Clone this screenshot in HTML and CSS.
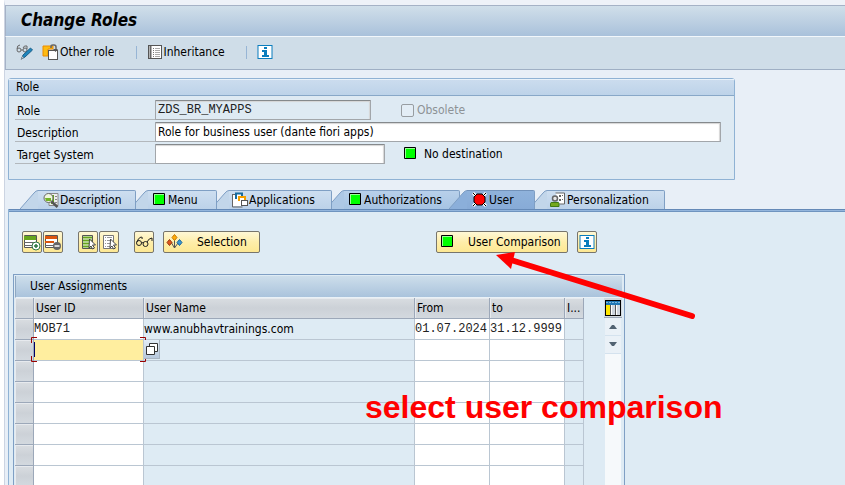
FILE: index.html
```html
<!DOCTYPE html>
<html lang="en">
<head>
<meta charset="utf-8">
<title>Change Roles</title>
<link rel="stylesheet" href="styles.css">
</head>
<body>
<svg class="defs" aria-hidden="true">
  <defs>
    <symbol id="i-green" viewBox="0 0 16 16"><rect x="2" y="1" width="12" height="12" rx="1" fill="#000"/><rect x="3" y="2" width="10" height="10" fill="#9f9"/><rect x="4" y="3" width="9" height="9" fill="#0f0"/></symbol>
    <symbol id="i-info" viewBox="0 0 16 16"><rect x="1" y="1.500" width="14" height="13" fill="#fff" stroke="#0a7dbd"/><path d="M7 3h3v2H7zM5 6h5v5h2v2H5v-2h2V8H5z" fill="#0a7dbd"/></symbol>
    <symbol id="i-slant" viewBox="0 0 18 19"><path d="M0 19L14 3Q16 .5 18 .5V19Z" fill="var(--tab)"/><path d="M0 19L14 3Q16 .5 18 .5" fill="none" stroke="#7f9fc4"/></symbol>
  </defs>
</svg>
<main class="window">
  <header class="titlebar"><h1>Change Roles</h1></header>
  <nav class="toolbar" aria-label="Functions">
    <button class="tool" aria-label="Display or change"><svg width="18" height="16" viewBox="0 0 18 16" fill="none" stroke="#666"><circle cx="3" cy="6" r="2"/><circle cx="9" cy="6" r="2"/><path d="M1 5Q1 1 4 1M7 4Q8 1 11 2L11 5M5 6h2"/><path d="M5.500 15l1.500-4 7.500-7 2 2-7.500 7z" fill="#1f86bd" stroke="#1d5f88"/><path d="M5 15.500l1.500-3 1 1z" fill="#fff" stroke="#777" stroke-width=".6"/></svg></button>
    <button class="tool other"><svg width="17" height="16" viewBox="0 0 17 16"><path d="M1 2h10v3H6v7H1z" fill="#fdbb12" stroke="#ec8b00"/><path d="M9 4V2.500Q9 1 11 1h1q2 0 2 2v3" fill="none" stroke="#666" stroke-width="1.500"/><rect x="6.500" y="6.500" width="9" height="9" fill="#fff" stroke="#555"/><path d="M11 5h5l-2.500 3z" fill="#555"/></svg><span>Other role</span></button>
    <i class="sep"></i>
    <button class="tool"><svg width="16" height="16" viewBox="0 0 16 16"><rect x="1.500" y="1.500" width="13" height="13" fill="#fff" stroke="#555"/><path d="M3.500 2v12" stroke="#666" stroke-width="2"/><path d="M6 4.500h1M6 6.500h1M6 8.500h1M6 10.500h1M6 12.500h1" stroke="#777"/><path d="M8 4.500h5M8 6.500h5M8 8.500h5M8 10.500h5M8 12.500h5" stroke="#aaa"/></svg><span>Inheritance</span></button>
    <i class="sep"></i>
    <button class="tool" aria-label="Information"><svg width="16" height="16"><use href="#i-info"/></svg></button>
  </nav>

  <section class="group">
    <h2>Role</h2>
    <div class="field"><label for="role">Role</label><input id="role" class="short mono" value="ZDS_BR_MYAPPS" readonly>
      <label class="check"><input type="checkbox" disabled>Obsolete</label></div>
    <div class="field"><label for="desc">Description</label><input id="desc" class="long" value="Role for business user (dante fiori apps)"></div>
    <div class="field"><label for="target">Target System</label><input id="target" class="medium">
      <span class="status"><svg width="16" height="16"><use href="#i-green"/></svg>No destination</span></div>
  </section>

  <div class="tabs" role="tablist">
    <button role="tab" class="tab first"><svg class="slant"><use href="#i-slant"/></svg><svg width="16" height="16" viewBox="0 0 16 16"><path d="M6 1.500h9v12H6z" fill="#eee" stroke="#888"/><path d="M8 3h3v9H8z" fill="#63a51b"/><path d="M12 4.500h2M12 7.500h2M12 10.500h2" stroke="#888"/><circle cx="5.500" cy="6" r="4.500" fill="#eef6dd" stroke="#666"/><path d="M2 6h6v3H3z" fill="#72b526"/><path d="M8.500 9.500l6 5.500" stroke="#555" stroke-width="2.500"/></svg><span>Description</span></button>
    <button role="tab" class="tab"><svg class="slant"><use href="#i-slant"/></svg><svg width="16" height="16"><use href="#i-green"/></svg><span>Menu</span></button>
    <button role="tab" class="tab"><svg class="slant"><use href="#i-slant"/></svg><svg width="16" height="16" viewBox="0 0 16 16"><path d="M1 2.500h3M.5 2v13h10" stroke="#666" fill="none"/><path d="M1 3h8v11H1z" fill="#fff"/><path d="M4 7V1.500h6V4" fill="#fff" stroke="#176b9e" stroke-width="2"/><path d="M7 9V5h6v3" fill="#fff" stroke="#f5a000" stroke-width="2"/><rect x="9.500" y="8.500" width="6" height="5" fill="#fff" stroke="#555"/></svg><span>Applications</span></button>
    <button role="tab" class="tab dark"><svg class="slant"><use href="#i-slant"/></svg><svg width="16" height="16"><use href="#i-green"/></svg><span>Authorizations</span></button>
    <button role="tab" class="tab active" aria-selected="true"><svg class="slant"><use href="#i-slant"/></svg><svg width="16" height="16" viewBox="0 0 16 16"><path d="M1 1l3 3M14 1l-3 3M1 14l3-3M14 14l-3-3" stroke="#fff" stroke-width="3"/><path d="M1 1l13 13M14 1L1 14" stroke="#000"/><path d="M5 2h5l3 3v5l-3 3H5l-3-3V5z" fill="red" stroke="#000"/></svg><span>User</span></button>
    <button role="tab" class="tab"><svg class="slant"><use href="#i-slant"/></svg><svg width="16" height="16" viewBox="0 0 16 16"><path d="M5.500 1h9v11h-5" fill="#fff" stroke="#666"/><path d="M9 3h2v2H9zM12 3h1v1h-1zM9 7h2v2H9zM12 7h1v1h-1z" fill="#666"/><circle cx="5" cy="6.500" r="2.500" fill="#e8e8e8" stroke="#666" stroke-width="1.500"/><path d="M.5 14.500v-3q0-1 1.500-1h6q1 0 1 1v3z" fill="#75a81d" stroke="#3f7a14"/></svg><span>Personalization</span></button>
  </div>

  <section class="panel" role="tabpanel">
    <div class="actions">
      <div class="pair">
        <button class="btn icon" aria-label="Insert row"><svg width="18" height="18" viewBox="0 0 18 18"><path d="M1.500 2.500h12v12h-12z" fill="#fff" stroke="#555"/><path d="M1 3h12v4H1z" fill="#67a51d"/><path d="M1 9.500h12M1 12.500h12" stroke="#666"/><circle cx="13" cy="13" r="4" fill="#fff" stroke="#2c7942"/><path d="M13 11v4M11 13h4" stroke="#2c7942" stroke-width="1.500"/></svg></button>
        <button class="btn icon" aria-label="Delete row"><svg width="18" height="18" viewBox="0 0 18 18"><path d="M1.500 2.500h12v12h-12z" fill="#fff" stroke="#555"/><path d="M1 3h12v3H1zM1 8h9v2H1z" fill="#dc560c"/><path d="M1 12.500h12" stroke="#666"/><circle cx="13" cy="13" r="4" fill="#666"/><path d="M10.500 13h5" stroke="#fff" stroke-width="1.500"/></svg></button>
      </div>
      <div class="pair">
        <button class="btn icon" aria-label="Select all"><svg width="18" height="18" viewBox="0 0 18 18"><path d="M3.500 2.500h10v13h-10z" fill="#fff" stroke="#555"/><path d="M4 4.500h9M4 7.500h9M4 10.500h9M4 13.500h9" stroke="#67a51d" stroke-width="2"/><path d="M10.500 6l6 6h-3l2 3-2 1-1.500-3-2 2z" fill="#fff" stroke="#444"/></svg></button>
        <button class="btn icon" aria-label="Deselect all"><svg width="18" height="18" viewBox="0 0 18 18"><path d="M3.500 2.500h10v13h-10z" fill="#fff" stroke="#777"/><path d="M5 4.500h1M5 7.500h1M5 10.500h1M5 13.500h1M7 4.500h5M7 7.500h5M7 10.500h5M7 13.500h5" stroke="#999"/><path d="M10.500 6l6 6h-3l2 3-2 1-1.500-3-2 2z" fill="#fff" stroke="#444"/></svg></button>
      </div>
      <button class="btn icon" aria-label="Display"><svg width="18" height="18" viewBox="0 0 18 18" fill="none" stroke="#222"><circle cx="4" cy="10" r="2.500"/><circle cx="10.500" cy="11" r="2.500"/><path d="M2 9Q3 5 6 4q2 0 1 2M6.500 10q1-1 2 0M12 9q2-4 5-4v3"/></svg></button>
      <button class="btn selection"><svg width="18" height="18" viewBox="0 0 18 18"><path d="M8.500 6v9M5 9l3.500 6L12 10" fill="none" stroke="#555"/><path d="M8.500 1.500l2.500 3-2.500 3-2.500-3z" fill="#ffad0a" stroke="#c77800"/><path d="M3.500 6.500l2.500 3-2.500 3-2.500-3z" fill="#df571c" stroke="#963411"/><path d="M13.500 6.500l2.500 3-2.500 3-2.500-3z" fill="#3d97d1" stroke="#17659a"/></svg><span>Selection</span></button>
      <button class="btn compare"><svg width="16" height="16"><use href="#i-green"/></svg><span>User Comparison</span></button>
      <button class="btn icon" aria-label="Information"><svg width="16" height="16"><use href="#i-info"/></svg></button>
    </div>

    <div class="grid">
      <h2>User Assignments</h2>
      <div class="gridbody">
        <table>
          <colgroup><col class="c-sel"><col class="c-id"><col class="c-name"><col class="c-date"><col class="c-date"><col class="c-ind"></colgroup>
          <thead><tr><th></th><th>User ID</th><th>User Name</th><th>From</th><th>to</th><th>I...</th></tr></thead>
          <tbody>
            <tr><th></th><td class="mono">MOB71</td><td>www.anubhavtrainings.com</td><td class="mono">01.07.2024</td><td class="mono">31.12.9999</td><td></td></tr>
            <tr><th></th><td class="focus"><input aria-label="User ID"><svg class="corners" viewBox="0 0 115 25" fill="none" stroke="#900"><path d="M.5 6V.5H6M109 .5h5.500V6M.5 19v5.500H6M109 24.500h5.500V19"/><path d="M3.500 5v15" stroke="#006"/></svg><button class="help" aria-label="Value help"><svg width="12" height="12" viewBox="0 0 12 12" fill="#fff" stroke="#333"><path d="M3.500 .5h8v8h-8z"/><path d="M.5 3.500h8v8h-8z"/></svg></button></td><td></td><td></td><td></td><td></td></tr>
            <tr><th></th><td></td><td></td><td></td><td></td><td></td></tr>
            <tr><th></th><td></td><td></td><td></td><td></td><td></td></tr>
            <tr><th></th><td></td><td></td><td></td><td></td><td></td></tr>
            <tr><th></th><td></td><td></td><td></td><td></td><td></td></tr>
            <tr><th></th><td></td><td></td><td></td><td></td><td></td></tr>
            <tr><th></th><td></td><td></td><td></td><td></td><td></td></tr>
          </tbody>
        </table>
        <div class="scroll">
          <button class="config" aria-label="Configuration"><svg width="16" height="16" viewBox="0 0 16 16"><rect x=".5" y=".5" width="15" height="15" fill="#fff" stroke="#000"/><path d="M1 1h14v4H1z" fill="#2077b5"/><path d="M1 2.500h14" stroke="#7db8df" stroke-dasharray="2 1"/><path d="M1 5h4v10H1z" fill="#ffe600"/><path d="M7 5h3v10H7zM12 5h3v10h-3z" fill="#cfd6df"/><path d="M5.500 5v10M10.500 5v10" stroke="#555"/></svg></button>
          <button class="arrow" aria-label="Scroll up"><svg width="8" height="5" viewBox="0 0 8 5"><path d="M0 5l3-4h2l3 4z" fill="#526372"/></svg></button>
          <button class="arrow" aria-label="Scroll down"><svg width="8" height="5" viewBox="0 0 8 5"><path d="M0 0h8L5 4H3z" fill="#526372"/></svg></button>
          <div class="track"></div>
        </div>
      </div>
    </div>
  </section>
</main>
<svg class="pointer" width="200" height="70" viewBox="0 0 200 70" aria-hidden="true"><path d="M16 9L197 65" stroke="red" stroke-width="6" stroke-linecap="round"/><path d="M1 4L20 1L16 18Z" fill="red"/></svg>
<p class="note">select user comparison</p>
</body>
</html>
```
FILE: styles.css
```css
* { box-sizing: border-box; }
body {
  margin: 0;
  min-height: 100vh;
  overflow: hidden;
  background: #fff;
  color: #000;
  font: 12px/16px "DejaVu Sans Condensed", "Noto Sans", sans-serif;
}
h1, h2, p { margin: 0; font-weight: normal; }
button, input { font: inherit; color: inherit; }
button { border: 0; padding: 0; background: none; }
svg { flex: none; display: block; }
.defs { position: absolute; width: 0; height: 0; }
.mono, .field > .mono { font-family: "Liberation Mono", monospace; color: #222; }

.window {
  margin-left: 4px;
  height: 100vh;
  min-height: 485px;
  display: flex;
  flex-direction: column;
  border-left: 1px solid #ccd4e2;
  border-top: 5px solid #eef2f8;
  background: #e8eff7;
}
.titlebar {
  height: 32px;
  padding: 5px 15px;
  flex: none;
  border-top: 1px solid #a5b2c6;
  border-left: 1px solid #a5b2c6;
  border-bottom: 1px solid #f2f7fb;
  background: linear-gradient(#d0dfea, #bdd0e2 50%, #a9c1db);
}
.titlebar h1 { font: italic bold 17px/18px "DejaVu Sans Condensed", "Noto Sans", sans-serif; }
.toolbar {
  height: 33px;
  flex: none;
  display: flex;
  align-items: center;
  padding: 0 0 2px 10px;
  border-left: 1px solid #a5b2c6;
  border-bottom: 1px solid #9fafc4;
  background: #cfdde8;
}
.tool { display: flex; align-items: center; gap: 1px; }
.other { margin-left: 8px; }
.sep { width: 1px; height: 13px; margin: 0 10px 0 21px; background: #97b5d5; }

.group {
  max-width: 727px;
  height: 102px;
  flex: none;
  margin: 8px 3px 0;
  border: 1px solid #8fb2d4;
  border-radius: 3px 3px 0 0;
  background: #deeaf3;
}
.group h2 {
  height: 17px;
  padding-left: 7px;
  margin-bottom: 4px;
  font: inherit;
  line-height: 15px;
  border-bottom: 1px solid #88a8c8;
  border-top: 1px solid #e8f2fa;
  background: linear-gradient(#cbdcee, #bdd3e9);
}
.field {
  display: flex;
  height: 20px;
  margin: 0 13px 2px 6px;
}
.field > label:first-child {
  width: 140px;
  padding: 3px 2px 0;
  border-bottom: 1px solid #b3b8bc;
}
.field > input {
  height: 20px;
  padding: 0 2px;
  border: 1px solid #a2a6aa;
  border-top-color: #85898c;
  border-radius: 1px;
  background: #fff;
  box-shadow: inset -1px 1px 1px #d5d5d5;
  outline: 0;
}
.field > input:read-only { background: #deeaf3; }
.short { width: 216px; }
.medium { width: 230px; }
.long { flex: 1; min-width: 0; }
.check { display: flex; align-items: center; gap: 3px; margin-left: 30px; color: #8d9296; }
.check input {
  appearance: none;
  width: 13px;
  height: 13px;
  margin: 0;
  border: 1px solid #989da1;
  border-radius: 2px;
  background: #e3edf5;
}
.status { display: flex; align-items: center; gap: 6px; margin-left: 17px; }

.tabs {
  display: grid;
  grid-template-columns: 116px 81px 115px 128px 75px 130px;
  height: 19px;
  flex: none;
  margin: 10px 0 0 15px;
}
.tab {
  --tab: #c2d6ea;
  position: relative;
  display: flex;
  align-items: center;
  gap: 1px;
  margin-left: -6px;
  padding: 1px 0 0 3px;
  background: linear-gradient(#7f9fc4 1px, #cddef0 1px, #bcd2e9) 18px 0 no-repeat;
  border-right: 1px solid #7f9fc4;
  border-radius: 0 2px 0 0;
}
.tab .slant { width: 18px; height: 19px; margin: -1px 0 0 -3px; }
.tab .slant + svg { margin-left: 2px; }
.tab:nth-child(1) { z-index: 4; }
.tab:nth-child(2) { z-index: 3; }
.tab:nth-child(3) { z-index: 2; }
.tab:nth-child(4) { z-index: 1; }
.tab:nth-child(5) { z-index: 5; }
.tab.first { margin-left: 0; }
.tab.dark { --tab: #adc8e5; background-image: linear-gradient(#7f9fc4 1px, #b8d0ea 1px, #a6c4e3); }
.tab.active { --tab: #8bafda; margin-left: -11px; background-image: linear-gradient(#7292ba 1px, #8fb2db 1px, #87abd7); }
.tab.first .slant + svg, .tab.active .slant + svg { margin-left: 4px; }

.panel {
  flex: 1;
  min-height: 0;
  margin-left: 3px;
  padding-top: 3px;
  border-left: 1px solid #8fb2d4;
  background: linear-gradient(#6489b7 1px, #93b5dc 1px 2px, #6f94bf 2px 3px, #deebf4 3px);
}
.actions { display: flex; align-items: center; gap: 9px; padding: 19px 0 0 13px; }
.pair { display: flex; gap: 1px; margin-right: 6px; }
.btn {
  height: 22px;
  display: flex;
  align-items: center;
  border: 1px solid #77756c;
  border-radius: 2px;
  background: linear-gradient(#fff8d6, #feeeaa 50%, #fde893);
}
.btn.icon { width: 20px; justify-content: center; }
.selection, .compare { padding-left: 2px; gap: 13px; }
.selection { width: 97px; }
.compare { width: 132px; margin-left: 167px; }

.grid {
  max-width: 612px;
  margin: 21px 0 0 4px;
  padding: 1px 2px 0 1px;
  border: 1px solid #7f9fc4;
  border-bottom: 0;
}
.grid h2 {
  height: 22px;
  padding: 2px 14px;
  font: inherit;
  border-left: 1px solid #8fa8c3;
  border-bottom: 1px solid #e9f1f7;
  background: linear-gradient(#cddeeb, #aac3dc);
}
.gridbody { display: flex; justify-content: space-between; }
table { width: 569px; table-layout: fixed; border-spacing: 0; }
.c-sel { width: 19px; }
.c-id { width: 110px; }
.c-name { width: 271px; }
.c-date { width: 75px; }
.c-ind { width: 19px; }
th, td {
  height: 21px;
  padding: 0;
  text-align: left;
  font-weight: normal;
  white-space: nowrap;
  border-right: 1px solid #bac6d2;
  border-bottom: 1px solid #bac6d2;
}
th {
  padding-left: 2px;
  background: linear-gradient(#d9dde1, #ccd1d7 50%, #d3d9df);
  border-color: #9ca8b9;
  box-shadow: inset 1px 1px #e7eaee;
}
td:nth-child(2), td:nth-child(4), td:nth-child(5) { background: #fff; }
.focus { position: relative; }
.focus input {
  display: block;
  width: 100%;
  height: 20px;
  border: 0;
  padding: 0 2px;
  outline: 0;
  background: #ffee9f;
}
.corners { position: absolute; left: -3px; top: -3px; width: 115px; height: 25px; }
.help {
  position: absolute;
  left: 110px;
  top: 0;
  width: 16px;
  height: 19px;
  display: grid;
  place-items: center;
  background: linear-gradient(#e3edf6, #b7c8dc);
  border-right: 1px solid #a9b5c2;
  border-bottom: 1px solid #a9b5c2;
}
.scroll { width: 18px; display: flex; flex-direction: column; align-items: center; }
.config {
  width: 18px;
  height: 20px;
  display: grid;
  place-items: center;
  background: #d3d9df;
  border-bottom: 1px solid #9ca8b9;
}
.arrow {
  width: 16px;
  height: 18px;
  display: grid;
  place-items: center;
  background: #eaf1f7;
  border-bottom: 1px solid #d4e2ee;
}
.track { width: 16px; flex: 1; background: #f6f9fb; }

.pointer { position: absolute; left: 495px; top: 251px; z-index: 6; }
.note {
  position: absolute;
  left: 365px;
  top: 389px;
  z-index: 6;
  color: red;
  font: bold 32px/36px "Liberation Sans", Arial, sans-serif;
  white-space: nowrap;
}
```
